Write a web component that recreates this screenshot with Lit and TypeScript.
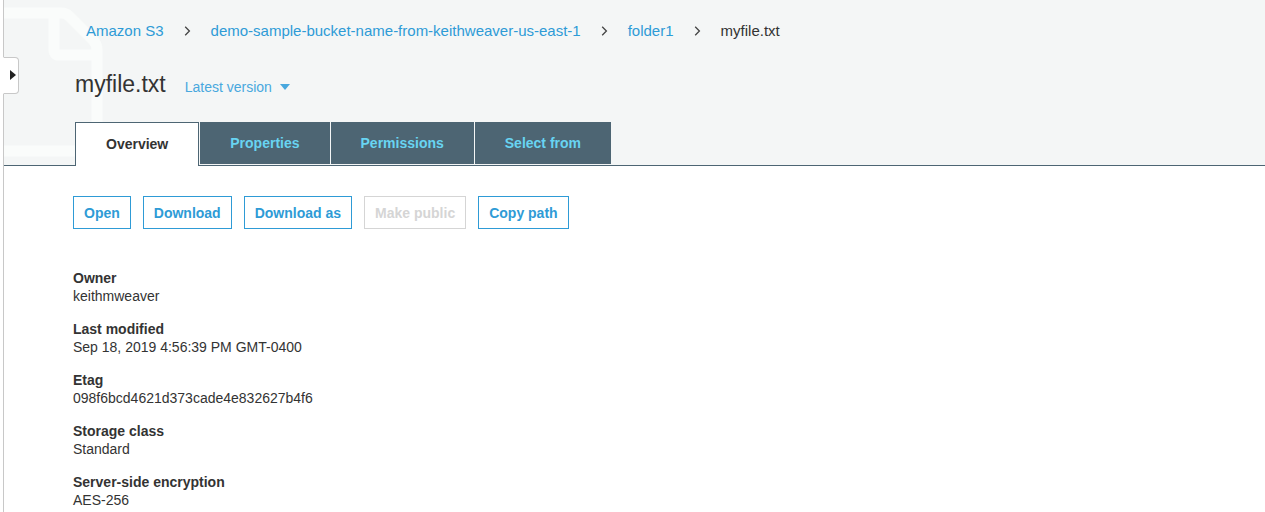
import { LitElement, html, css, svg } from "lit";
import { customElement, state } from "lit/decorators.js";
import { classMap } from "lit/directives/class-map.js";

const TABS = ["Overview", "Properties", "Permissions", "Select from"];

const PATH = ["Amazon S3", "demo-sample-bucket-name-from-keithweaver-us-east-1", "folder1"];

const ACTIONS = [
  { label: "Open", disabled: false },
  { label: "Download", disabled: false },
  { label: "Download as", disabled: false },
  { label: "Make public", disabled: true },
  { label: "Copy path", disabled: false },
];

const DETAILS = [
  ["Owner", "keithmweaver"],
  ["Last modified", "Sep 18, 2019 4:56:39 PM GMT-0400"],
  ["Etag", "098f6bcd4621d373cade4e832627b4f6"],
  ["Storage class", "Standard"],
  ["Server-side encryption", "AES-256"],
];

const chevron = svg`<path d="M1.2 0.8 L5.4 5 L1.2 9.2" fill="none" stroke="#444" stroke-width="1.3"/>`;

@customElement("app-root")
export class AppRoot extends LitElement {
  static styles = css`
    :host {
      display: block;
      box-sizing: border-box;
      height: 100vh;
      overflow: hidden;
      padding-left: 3px;
      background: #fff;
      color: #333;
      font: 14px/18px "Liberation Sans", Arial, sans-serif;
    }
    .page {
      position: relative;
      min-height: 100%;
      border-left: 1px solid #c8c8c8;
    }
    .drawer {
      position: absolute;
      z-index: 1;
      left: -1px;
      top: 57px;
      width: 16px;
      height: 37px;
      box-sizing: border-box;
      padding: 0 2px 2px 0;
      display: flex;
      align-items: center;
      justify-content: flex-end;
      border: 1px solid #c8c8c8;
      border-left-color: #fff;
      border-radius: 0 4px 4px 0;
      background: #fff;
    }
    .header {
      position: relative;
      padding: 22px 0 0 71px;
      background: #f4f6f6;
      border-bottom: 1px solid #4d6573;
    }
    .watermark {
      position: absolute;
      left: 0;
      top: 0;
    }
    .crumbs,
    .heading,
    .tabs {
      position: relative;
      display: flex;
    }
    .crumbs {
      align-items: center;
      margin: 0;
      padding: 0 0 0 11px;
      list-style: none;
      font-size: 15px;
      white-space: nowrap;
    }
    .crumb {
      display: flex;
      align-items: center;
    }
    .sep {
      width: 7px;
      height: 10px;
      margin: 0 20px;
    }
    a {
      color: #2e9bd6;
      text-decoration: none;
    }
    .heading {
      align-items: baseline;
      gap: 19px;
      margin-top: 30px;
    }
    h1 {
      margin: 0;
      font-size: 23px;
      line-height: 28px;
      font-weight: 400;
    }
    button {
      font: inherit;
      margin: 0;
      cursor: pointer;
    }
    .version {
      display: flex;
      align-items: center;
      gap: 8px;
      padding: 0;
      border: 0;
      background: none;
      color: #48a8de;
    }
    .tabs {
      margin-top: 24px;
      gap: 1px;
    }
    .tab {
      height: 42px;
      padding: 0 30px;
      border: 0;
      background: #4d6573;
      color: #68d4f2;
      font-weight: 700;
      white-space: nowrap;
    }
    .tab.active {
      height: 44px;
      margin-bottom: -1px;
      padding-bottom: 2px;
      border: 1px solid #4d6573;
      border-bottom: 0;
      background: #fff;
      color: #333;
    }
    .content {
      padding: 30px 0 0 69px;
    }
    .actions {
      display: flex;
      gap: 12px;
    }
    .action {
      height: 33px;
      padding: 0 10px;
      border: 1px solid #2e9bd6;
      background: #fff;
      color: #2e9bd6;
      font-weight: 700;
      white-space: nowrap;
    }
    .action:disabled {
      border-color: #d5d5d5;
      color: #d5d5d5;
      cursor: default;
    }
    .details {
      display: grid;
      gap: 15px;
      margin: 40px 0 0;
    }
    dt {
      font-weight: 700;
    }
    dd {
      margin: 0;
    }
  `;

  @state() private active = 0;

  render() {
    return html`
      <div class="page">
        <button class="drawer" aria-label="Open side panel">
          <svg width="6" height="10" aria-hidden="true"><path d="M0 0 L6 5 L0 10Z" fill="#222" /></svg>
        </button>
        <header class="header">
          <svg class="watermark" width="110" height="165" fill="none" stroke="#fafcfb" stroke-width="11" aria-hidden="true">
            <path d="M0 13 H57 Q62 13 65 16 L89 40 Q93 44 93 50 V151 H0 M50 13 V50 Q50 55 55 55 H93" />
          </svg>
          <nav aria-label="Breadcrumb">
            <ol class="crumbs">
              ${PATH.map(
                (p) => html`<li class="crumb">
                  <a href="#">${p}</a>
                  <svg class="sep" viewBox="0 0 7 10" aria-hidden="true">${chevron}</svg>
                </li>`
              )}
              <li class="crumb" aria-current="page">myfile.txt</li>
            </ol>
          </nav>
          <div class="heading">
            <h1>myfile.txt</h1>
            <button class="version">
              Latest version
              <svg width="10" height="6" aria-hidden="true"><path d="M0 0 H10 L5 6Z" fill="#48a8de" /></svg>
            </button>
          </div>
          <div class="tabs" role="tablist">
            ${TABS.map(
              (t, i) => html`<button
                role="tab"
                class=${classMap({ tab: true, active: i === this.active })}
                aria-selected=${i === this.active ? "true" : "false"}
                @click=${() => (this.active = i)}
              >${t}</button>`
            )}
          </div>
        </header>
        <main class="content">
          <div class="actions">
            ${ACTIONS.map((a) => html`<button class="action" ?disabled=${a.disabled}>${a.label}</button>`)}
          </div>
          <dl class="details">
            ${DETAILS.map(([k, v]) => html`<div><dt>${k}</dt><dd>${v}</dd></div>`)}
          </dl>
        </main>
      </div>
    `;
  }
}
